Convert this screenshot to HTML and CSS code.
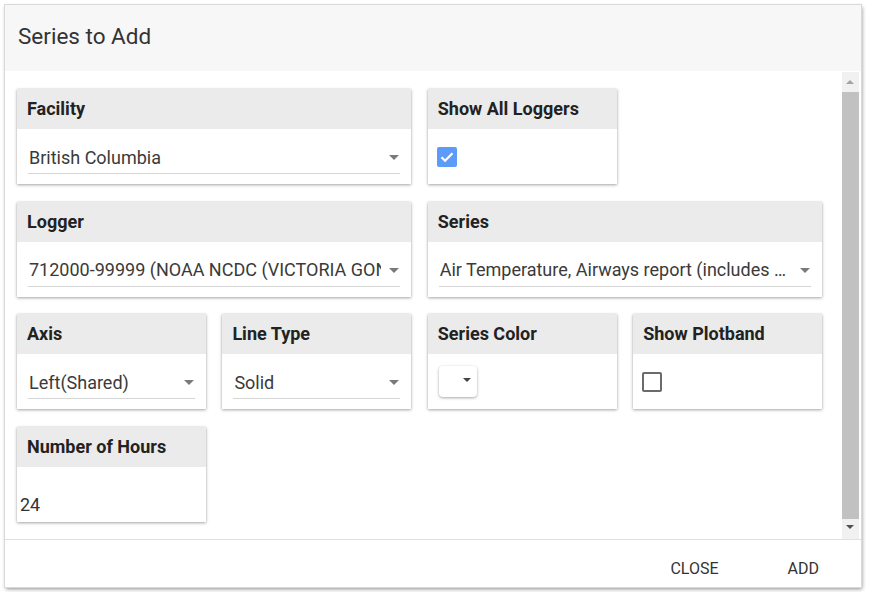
FILE: index.html
```html
<!DOCTYPE html>
<html>
<head>
<meta charset="utf-8">
<link rel="stylesheet" href="styles.css">
</head>
<body>
<div class="dialog">
  <div class="dialog-header">Series to Add</div>
  <div class="dialog-body">
    <div class="content">
      <div class="grid">
        <div class="card span2">
          <div class="card-title">Facility</div>
          <div class="card-body">
            <div class="select"><span class="select-text">British Columbia</span><span class="caret"></span></div>
          </div>
        </div>
        <div class="card">
          <div class="card-title">Show All Loggers</div>
          <div class="card-body">
            <div class="checkbox checked">
              <svg viewBox="0 0 20 20" width="20" height="20"><path d="M4.5 10.2l3.6 3.5 7.4-7.4" fill="none" stroke="#fff" stroke-width="2.2"/></svg>
            </div>
          </div>
        </div>
        <div class="spacer"></div>

        <div class="card span2">
          <div class="card-title">Logger</div>
          <div class="card-body">
            <div class="select"><span class="select-text clip">712000-99999 (NOAA NCDC (VICTORIA GONZALES HTS))</span><span class="caret"></span></div>
          </div>
        </div>
        <div class="card span2">
          <div class="card-title">Series</div>
          <div class="card-body">
            <div class="select"><span class="select-text ellipsis">Air Temperature, Airways report (includes hourly)</span><span class="caret"></span></div>
          </div>
        </div>

        <div class="card">
          <div class="card-title">Axis</div>
          <div class="card-body">
            <div class="select"><span class="select-text">Left(Shared)</span><span class="caret"></span></div>
          </div>
        </div>
        <div class="card">
          <div class="card-title">Line Type</div>
          <div class="card-body">
            <div class="select"><span class="select-text">Solid</span><span class="caret"></span></div>
          </div>
        </div>
        <div class="card">
          <div class="card-title">Series Color</div>
          <div class="card-body">
            <div class="color-btn"><span class="caret small"></span></div>
          </div>
        </div>
        <div class="card">
          <div class="card-title">Show Plotband</div>
          <div class="card-body">
            <div class="checkbox"></div>
          </div>
        </div>

        <div class="card">
          <div class="card-title">Number of Hours</div>
          <div class="card-body hours">
            <span class="hours-value">24</span>
          </div>
        </div>
      </div>
    </div>
    <div class="scrollbar">
      <div class="arrow up"></div>
      <div class="thumb"></div>
      <div class="arrow down"></div>
    </div>
  </div>
  <div class="dialog-footer">
    <span class="btn">CLOSE</span>
    <span class="btn">ADD</span>
  </div>
</div>
</body>
</html>
```

FILE: styles.css
```css
* { box-sizing: border-box; }
html, body {
  margin: 0;
  padding: 0;
  background: #ffffff;
  font-family: Roboto, "Liberation Sans", sans-serif;
}
body { padding: 5px; }

.dialog {
  width: 856px;
  height: 582px;
  background: #fff;
  display: flex;
  flex-direction: column;
  box-shadow: 0 0 0 1px #d9d9d9, 1px 2px 4px rgba(0,0,0,0.45);
}

.dialog-header {
  height: 66px;
  background: #f7f7f7;
  padding: 19px 0 0 13px;
  font-size: 22.5px;
  color: #333;
  line-height: 24px;
}

.dialog-body {
  height: 469px;
  display: flex;
  border-bottom: 1px solid #e0e0e0;
}

.content {
  flex: 1;
  padding: 18px 20px 0 12px;
  overflow: hidden;
}

.grid {
  display: grid;
  grid-template-columns: repeat(4, 1fr);
  column-gap: 16.5px;
  row-gap: 17.5px;
}

.span2 { grid-column: span 2; }

.card {
  background: #fff;
  height: 95px;
  box-shadow: 0 1px 3px rgba(0,0,0,0.35), 0 0 1px rgba(0,0,0,0.12);
  display: flex;
  flex-direction: column;
}

.card-title {
  height: 40px;
  background: #ebebeb;
  padding: 0 10px;
  font-size: 18px;
  font-weight: 700;
  color: #222;
  line-height: 40px;
}

.card-body {
  flex: 1;
  padding: 0 11px;
  position: relative;
}

.select {
  margin-top: 12px;
  height: 33px;
  border-bottom: 1px solid #d6d6d6;
  display: flex;
  align-items: center;
  position: relative;
}

.select-text {
  font-size: 18px;
  color: #3a3a3a;
  padding-left: 1px;
  white-space: nowrap;
  overflow: hidden;
  flex: 1;
  min-width: 0;
  padding-right: 12px;
}
.select-text.clip { text-overflow: clip; margin-right: 19px; padding-right: 0; }
.select-text.ellipsis { text-overflow: ellipsis; padding-right: 22px; }

.caret {
  position: absolute;
  right: 1px;
  top: 14px;
  width: 0;
  height: 0;
  border-left: 5px solid transparent;
  border-right: 5px solid transparent;
  border-top: 5px solid #7a7a7a;
}
.caret.small {
  right: 6px;
  top: 12px;
  border-left-width: 4px;
  border-right-width: 4px;
  border-top: 4px solid #444;
}

.checkbox {
  margin-top: 18px;
  margin-left: -2px;
  width: 20px;
  height: 20px;
  border: 2px solid #6b6b6b;
  border-radius: 2px;
}
.checkbox.checked {
  background: #5c9cf8;
  border: none;
}
.checkbox svg { display: block; }

.color-btn {
  margin-top: 12px;
  width: 38px;
  height: 31px;
  background: #fff;
  border-radius: 4px;
  box-shadow: 0 1px 3px rgba(0,0,0,0.35);
  position: relative;
}

.hours { padding: 0 3px; display: flex; align-items: flex-end; }
.hours-value {
  font-size: 18px;
  color: #333;
  margin-bottom: 7px;
}

.scrollbar {
  width: 17px;
  margin-right: 2px;
  background: #f1f1f1;
  display: flex;
  flex-direction: column;
  align-items: center;
  margin-top: 1px;
}
.arrow {
  height: 20px;
  width: 17px;
  position: relative;
}
.arrow::after {
  content: "";
  position: absolute;
  left: 4px;
  width: 0; height: 0;
  border-left: 4.5px solid transparent;
  border-right: 4.5px solid transparent;
}
.arrow.up::after { top: 8px; border-bottom: 4.5px solid #a3a3a3; }
.arrow.down::after { top: 6px; border-top: 4.5px solid #505050; }
.thumb {
  flex: 1;
  width: 17px;
  background: #c1c1c1;
}

.dialog-footer {
  flex: 1;
  display: flex;
  justify-content: flex-end;
  align-items: center;
  padding: 0 42px 0 0;
  gap: 69px;
}
.btn {
  font-size: 16px;
  color: #333;
  letter-spacing: 0;
  margin-top: 10px;
}
```
